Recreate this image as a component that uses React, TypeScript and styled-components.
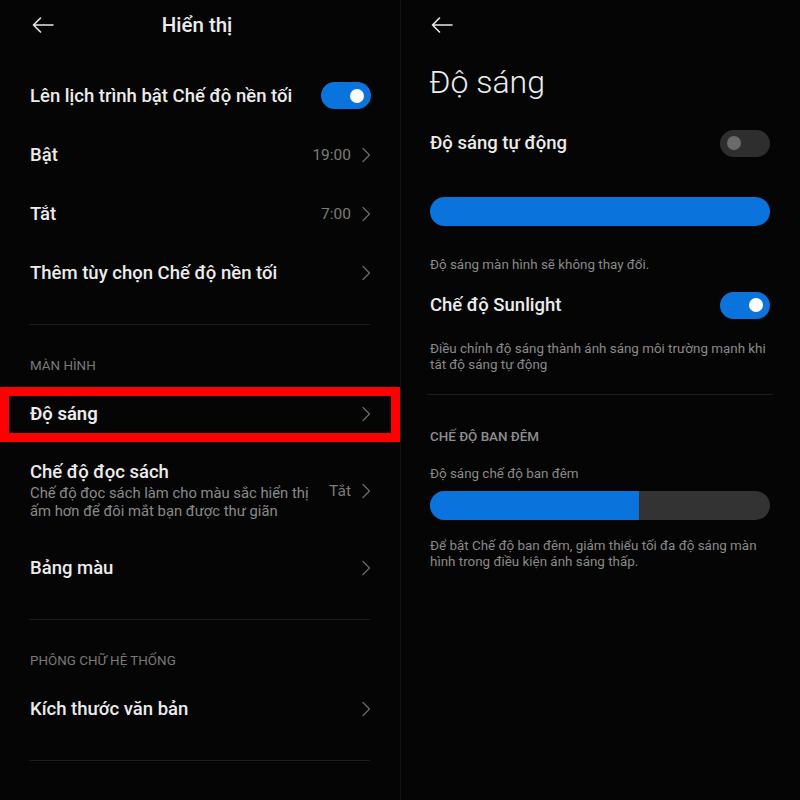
import React from "react";
import styled, { createGlobalStyle } from "styled-components";

const Global = createGlobalStyle`
  html, body { margin: 0; padding: 0; background: #050505; }
  body { font-family: Roboto, "Noto Sans", "Liberation Sans", sans-serif; -webkit-font-smoothing: antialiased; }
  * { box-sizing: border-box; }
`;

const BLUE = "#0a74dc";

const Screen = styled.div`
  display: grid;
  grid-template-columns: 400px 400px;
  width: 800px;
  height: 800px;
  background: #050505;
  overflow: hidden;
`;

const Panel = styled.div<{ $divider?: boolean }>`
  display: flex;
  flex-direction: column;
  border-left: ${(p) => (p.$divider ? "1px solid #141414" : "none")};
`;

const Header = styled.div<{ $centered?: boolean }>`
  position: relative;
  height: 50px;
  display: flex;
  align-items: center;
  justify-content: ${(p) => (p.$centered ? "center" : "flex-start")};
  padding: 0 ${(p) => (p.$centered ? "0" : "30px")};
`;

const BackButton = styled.div<{ $abs?: boolean }>`
  width: 22px;
  height: 16px;
  display: flex;
  ${(p) => (p.$abs ? "position: absolute; left: 32px; top: 17px;" : "")}
`;

const HeaderTitle = styled.div`
  color: #ececec;
  font-size: 20.5px;
  font-weight: 500;
  margin-left: -6px;
`;

const List = styled.div`
  display: flex;
  flex-direction: column;
  padding-top: 16px;
`;

const Row = styled.div<{ $height?: number }>`
  position: relative;
  min-height: ${(p) => p.$height ?? 59}px;
  display: flex;
  align-items: center;
  justify-content: space-between;
  padding: 0 29px 0 30px;
  gap: 12px;
`;

const Highlight = styled.div`
  position: absolute;
  left: 0;
  right: 0;
  top: 3px;
  height: 55px;
  border: 9px solid #ff0000;
  pointer-events: none;
`;

const RowText = styled.div`
  display: flex;
  flex-direction: column;
  padding: 18px 0;
`;

const RowTitle = styled.div<{ $bold?: boolean }>`
  color: #ececec;
  font-size: 18.5px;
  font-weight: ${(p) => (p.$bold ? 600 : 500)};
  line-height: 22px;
  white-space: nowrap;
`;

const RowSub = styled.div`
  color: #8a8a8a;
  font-size: 14.8px;
  line-height: 18px;
  margin-top: 1px;
  white-space: nowrap;
`;

const RowRight = styled.div`
  display: flex;
  align-items: center;
  gap: 11px;
  flex-shrink: 0;
`;

const Value = styled.span`
  color: #7c7c7c;
  font-size: 15.5px;
`;

const Divider = styled.div<{ $top?: number; $bleed?: number }>`
  height: 1px;
  background: #1c1c1c;
  margin: ${(p) => p.$top ?? 22}px ${(p) => 30 - (p.$bleed ?? 0)}px 0 ${(p) => 29 - (p.$bleed ?? 0)}px;
`;

const SectionHeader = styled.div`
  height: 59px;
  display: flex;
  align-items: flex-end;
  padding: 0 30px 9px;
  color: #7a7a7a;
  font-size: 13.4px;
  line-height: 18px;
`;

const Toggle = styled.div<{ $on: boolean }>`
  width: 50px;
  height: 27px;
  border-radius: 14px;
  background: ${(p) => (p.$on ? BLUE : "#2e2e2e")};
  display: flex;
  align-items: center;
  justify-content: ${(p) => (p.$on ? "flex-end" : "flex-start")};
  padding: 0 7px;
  flex-shrink: 0;
`;

const Knob = styled.div<{ $on: boolean }>`
  width: 14px;
  height: 14px;
  border-radius: 50%;
  background: ${(p) => (p.$on ? "#ffffff" : "#6a6a6a")};
`;

/* Right panel */
const Content = styled.div`
  display: flex;
  flex-direction: column;
  padding: 0 30px 0 29px;
`;

const BigTitle = styled.div`
  height: 64px;
  line-height: 64px;
  color: #ececec;
  font-size: 32px;
  font-weight: 300;
  margin-left: -1px;
`;

const SettingRow = styled.div<{ $top?: number }>`
  height: 58px;
  margin-top: ${(p) => p.$top ?? 0}px;
  display: flex;
  align-items: center;
  justify-content: space-between;
`;

const Slider = styled.div<{ $top: number }>`
  margin-top: ${(p) => p.$top}px;
  height: 29px;
  border-radius: 15px;
  background: #333333;
  overflow: hidden;
  display: flex;
`;

const SliderFill = styled.div`
  height: 100%;
  background: ${BLUE};
`;

const Caption = styled.div<{ $top: number; $color?: string; $weight?: number }>`
  margin-top: ${(p) => p.$top}px;
  color: ${(p) => p.$color ?? "#8a8a8a"};
  font-size: 13.4px;
  font-weight: ${(p) => p.$weight ?? 400};
  line-height: 16px;
  white-space: nowrap;
`;

const Chevron = () => (
  <svg width="9" height="16" viewBox="0 0 9 16" fill="none">
    <path d="M1 1.5 L7.5 8 L1 14.5" stroke="#6a6a6a" strokeWidth="1.3" strokeLinecap="round" strokeLinejoin="round" />
  </svg>
);

const Arrow = () => (
  <svg width="22" height="16" viewBox="0 0 22 16" fill="none">
    <path d="M21 8 H1.5 M8.5 1 L1.5 8 L8.5 15" stroke="#e8e8e8" strokeWidth="1.6" strokeLinecap="round" strokeLinejoin="round" />
  </svg>
);

export default function App() {
  return (
    <>
      <Global />
      <Screen>
        <Panel>
          <Header $centered>
            <BackButton $abs>
              <Arrow />
            </BackButton>
            <HeaderTitle>Hiển thị</HeaderTitle>
          </Header>
          <List>
            <Row>
              <RowTitle>Lên lịch trình bật Chế độ nền tối</RowTitle>
              <Toggle $on>
                <Knob $on />
              </Toggle>
            </Row>
            <Row>
              <RowTitle>Bật</RowTitle>
              <RowRight>
                <Value>19:00</Value>
                <Chevron />
              </RowRight>
            </Row>
            <Row>
              <RowTitle>Tắt</RowTitle>
              <RowRight>
                <Value>7:00</Value>
                <Chevron />
              </RowRight>
            </Row>
            <Row>
              <RowTitle>Thêm tùy chọn Chế độ nền tối</RowTitle>
              <RowRight>
                <Chevron />
              </RowRight>
            </Row>
            <Divider />
            <SectionHeader>MÀN HÌNH</SectionHeader>
            <Row>
              <RowTitle $bold>Độ sáng</RowTitle>
              <RowRight>
                <Chevron />
              </RowRight>
              <Highlight />
            </Row>
            <Row>
              <RowText>
                <RowTitle>Chế độ đọc sách</RowTitle>
                <RowSub>
                  Chế độ đọc sách làm cho màu sắc hiển thị
                  <br />
                  ấm hơn để đôi mắt bạn được thư giãn
                </RowSub>
              </RowText>
              <RowRight>
                <Value>Tắt</Value>
                <Chevron />
              </RowRight>
            </Row>
            <Row>
              <RowTitle>Bảng màu</RowTitle>
              <RowRight>
                <Chevron />
              </RowRight>
            </Row>
            <Divider />
            <SectionHeader>PHÔNG CHỮ HỆ THỐNG</SectionHeader>
            <Row>
              <RowTitle>Kích thước văn bản</RowTitle>
              <RowRight>
                <Chevron />
              </RowRight>
            </Row>
            <Divider />
          </List>
        </Panel>

        <Panel $divider>
          <Header>
            <BackButton>
              <Arrow />
            </BackButton>
          </Header>
          <Content>
            <BigTitle>Độ sáng</BigTitle>
            <SettingRow>
              <RowTitle>Độ sáng tự động</RowTitle>
              <Toggle $on={false}>
                <Knob $on={false} />
              </Toggle>
            </SettingRow>
            <Slider $top={25}>
              <SliderFill style={{ width: "100%" }} />
            </Slider>
            <Caption $top={31}>Độ sáng màn hình sẽ không thay đổi.</Caption>
            <SettingRow $top={3}>
              <RowTitle>Chế độ Sunlight</RowTitle>
              <Toggle $on>
                <Knob $on />
              </Toggle>
            </SettingRow>
            <Caption $top={7}>
              Điều chỉnh độ sáng thành ánh sáng môi trường mạnh khi
              <br />
              tắt độ sáng tự động
            </Caption>
          </Content>
          <Divider $top={21} $bleed={3} />
          <Content>
            <Caption $top={34} $color="#8e8e8e" $weight={500}>
              CHẾ ĐỘ BAN ĐÊM
            </Caption>
            <Caption $top={21}>Độ sáng chế độ ban đêm</Caption>
            <Slider $top={9}>
              <SliderFill style={{ width: `${(209 / 340) * 100}%` }} />
            </Slider>
            <Caption $top={18}>
              Để bật Chế độ ban đêm, giảm thiểu tối đa độ sáng màn
              <br />
              hình trong điều kiện ánh sáng thấp.
            </Caption>
          </Content>
        </Panel>
      </Screen>
    </>
  );
}
